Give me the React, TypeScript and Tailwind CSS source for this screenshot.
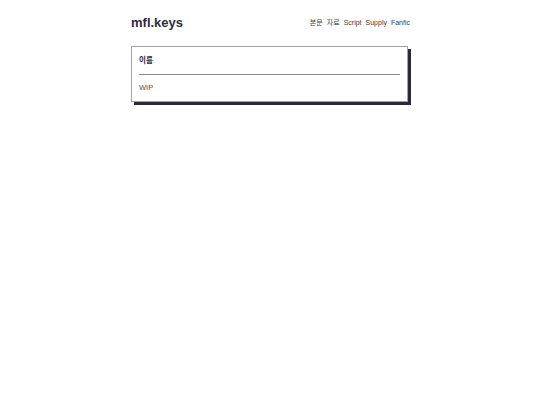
import React from "react";

export default function App() {
  return (
    <div
      className="min-h-[405px] w-full bg-white"
      style={{ fontFamily: '"Liberation Sans", "Noto Sans CJK KR", sans-serif' }}
    >
      <div className="mx-auto w-[280px] pl-px pt-[14px]">
        <header className="flex h-[16px] items-center justify-between">
          <div className="text-[13px] font-bold leading-none text-[#2b2c3f]">mfl.keys</div>
          <nav className="flex items-center gap-[4px] text-[7px] leading-none text-[#3a3a48]">
            <span>본문</span>
            <span>자료</span>
            <span>Script</span>
            <span>Supply</span>
            <span>Fanfic</span>
          </nav>
        </header>
        <div className="mr-[2px] mt-[16px] border border-[#a3a3a3] bg-white px-[7px] pb-[8px] pt-[9px] shadow-[3px_3px_0_#2a2a3c]">
          <div className="h-[10px] text-[7.5px] font-bold leading-[10px] text-[#2b2c3f]">이름</div>
          <div className="mt-[8px] h-px bg-[#8a8a8a]" />
          <div className="mt-[8px] h-[10px] text-[7.5px] leading-[10px] text-[#4a4a55]">WIP</div>
        </div>
      </div>
    </div>
  );
}
